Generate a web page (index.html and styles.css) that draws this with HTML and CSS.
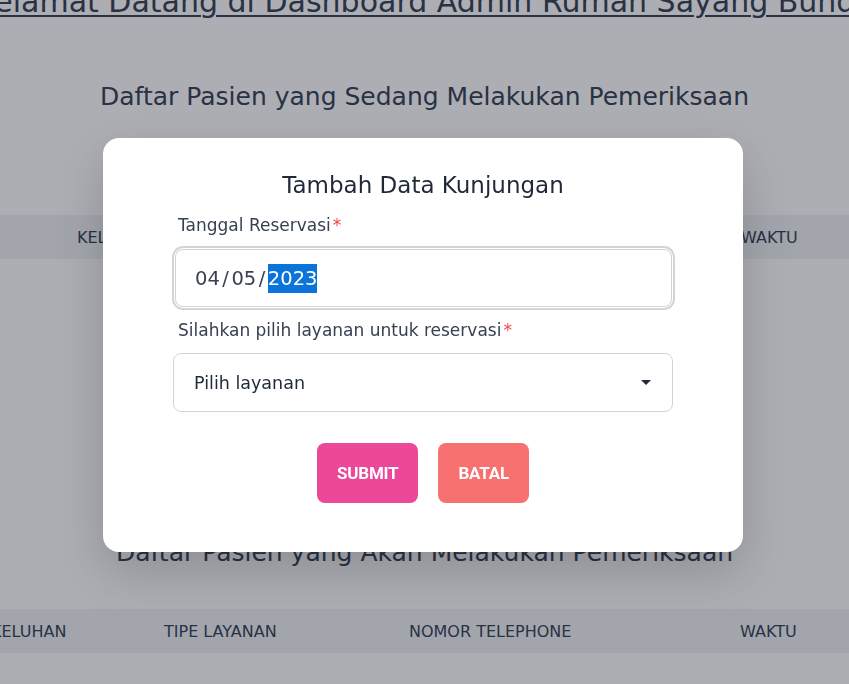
FILE: index.html
```html
<!DOCTYPE html>
<html lang="id">
<head>
<meta charset="utf-8">
<title>Dashboard Admin Rumah Sayang Bunda</title>
<link rel="stylesheet" href="styles.css">
</head>
<body>
<main class="page">
  <h1 class="welcome"><span>Selamat Datang di Dashboard Admin Rumah Sayang Bunda</span></h1>

  <section class="section section-now">
    <h2 class="section-title">Daftar Pasien yang Sedang Melakukan Pemeriksaan</h2>
    <div class="table-head head-now">
      <span class="col">KELUHAN</span>
      <span class="col">TIPE LAYANAN</span>
      <span class="col">NOMOR TELEPHONE</span>
      <span class="col">WAKTU</span>
    </div>
  </section>

  <section class="section section-next">
    <h2 class="section-title">Daftar Pasien yang Akan Melakukan Pemeriksaan</h2>
    <div class="table-head head-next">
      <span class="col">KELUHAN</span>
      <span class="col">TIPE LAYANAN</span>
      <span class="col">NOMOR TELEPHONE</span>
      <span class="col">WAKTU</span>
    </div>
  </section>
</main>

<div class="overlay">
  <div class="modal">
    <h3 class="modal-title">Tambah Data Kunjungan</h3>
    <form class="form">
      <label class="label">Tanggal Reservasi<span class="req">*</span></label>
      <div class="date-field">
        <span class="seg">04</span><span class="sep">/</span><span class="seg">05</span><span class="sep">/</span><span class="seg seg-active">2023</span>
      </div>
      <label class="label label-gap">Silahkan pilih layanan untuk reservasi<span class="req">*</span></label>
      <div class="select-field">
        <span class="select-text">Pilih layanan</span>
        <span class="caret"></span>
      </div>
      <div class="actions">
        <button type="button" class="btn btn-submit">SUBMIT</button>
        <button type="button" class="btn btn-cancel">BATAL</button>
      </div>
    </form>
  </div>
</div>
</body>
</html>
```

FILE: styles.css
```css
* { box-sizing: border-box; }

html, body {
  margin: 0;
  padding: 0;
  height: 100%;
}

body {
  background: #ffffff;
  font-family: "DejaVu Sans", "Noto Sans", sans-serif;
  color: #374151;
  overflow: hidden;
}

.page {
  width: 849px;
  overflow: hidden;
}

.welcome {
  display: flex;
  justify-content: center;
  margin: -18px 0 0;
  font-size: 30px;
  line-height: 40px;
  font-weight: 400;
  white-space: nowrap;
  color: #374151;
}

.welcome span {
  text-decoration: underline;
  text-decoration-thickness: 2px;
  text-underline-offset: 3px;
}

.section-title {
  margin: 0;
  text-align: center;
  font-size: 25px;
  line-height: 32px;
  font-weight: 400;
  color: #374151;
}

.section-now {
  margin-top: 59px;
}

.section-now .table-head {
  margin-top: 102px;
}

.section-next {
  margin-top: 278px;
}

.section-next .table-head {
  margin-top: 40px;
}

.table-head {
  display: grid;
  align-items: center;
  height: 44px;
  background: #f1f2f4;
  font-size: 16px;
  font-weight: 400;
  color: #374151;
  white-space: nowrap;
}

.head-now {
  grid-template-columns: 180px 240px 244px auto;
  padding-left: 77px;
}

.head-next {
  grid-template-columns: 173px 245px 331px auto;
  margin-left: -9px;
}

.overlay {
  position: fixed;
  inset: 0;
  background: rgba(17, 24, 39, 0.35);
  display: flex;
  align-items: center;
  justify-content: center;
}

.modal {
  width: 640px;
  margin: 6px 3px 0 0;
  padding: 33px 0 49px;
  background: #ffffff;
  border-radius: 16px;
  box-shadow: 0 20px 50px rgba(0, 0, 0, 0.18);
}

.modal-title {
  margin: 0 0 16px;
  text-align: center;
  font-size: 23px;
  line-height: 28px;
  font-weight: 400;
  color: #1f2937;
}

.form {
  width: 500px;
  margin: 0 auto;
  display: flex;
  flex-direction: column;
}

.label {
  display: block;
  padding-left: 5px;
  font-size: 17px;
  line-height: 20px;
  color: #374151;
  margin-bottom: 14px;
}

.label-gap {
  margin-top: 13px;
  margin-bottom: 13px;
}

.req {
  color: #ef4444;
  margin-left: 2px;
}

.date-field {
  display: flex;
  align-items: center;
  height: 58px;
  margin: 0 1px 0 2px;
  padding-left: 19px;
  border: 1px solid #d1d5db;
  border-radius: 8px;
  box-shadow: 0 0 0 1px #ffffff, 0 0 0 3px #d4d4d8;
  font-size: 19.5px;
  color: #374151;
}

.seg { padding: 1px 0; line-height: 27px; }
.sep { margin: 0 2.5px; }
.seg-active {
  background: #0a74da;
  color: #ffffff;
}

.select-field {
  display: flex;
  align-items: center;
  justify-content: space-between;
  height: 59px;
  padding: 0 21px 0 20px;
  border: 1px solid #d1d5db;
  border-radius: 8px;
  background: #ffffff;
}

.select-text {
  font-size: 17.5px;
  font-weight: 400;
  color: #1f2937;
}

.caret {
  width: 0;
  height: 0;
  border-left: 5px solid transparent;
  border-right: 5px solid transparent;
  border-top: 5px solid #1f2937;
}

.actions {
  display: flex;
  justify-content: center;
  gap: 20px;
  margin-top: 31px;
}

.btn {
  height: 60px;
  padding: 0 20px;
  border: none;
  border-radius: 8px;
  font-family: Roboto, "Liberation Sans", sans-serif;
  font-size: 17px;
  font-weight: 700;
  letter-spacing: -0.2px;
  color: #ffffff;
}

.btn-submit { background: #ec4899; }
.btn-cancel { background: #f87171; }
```
